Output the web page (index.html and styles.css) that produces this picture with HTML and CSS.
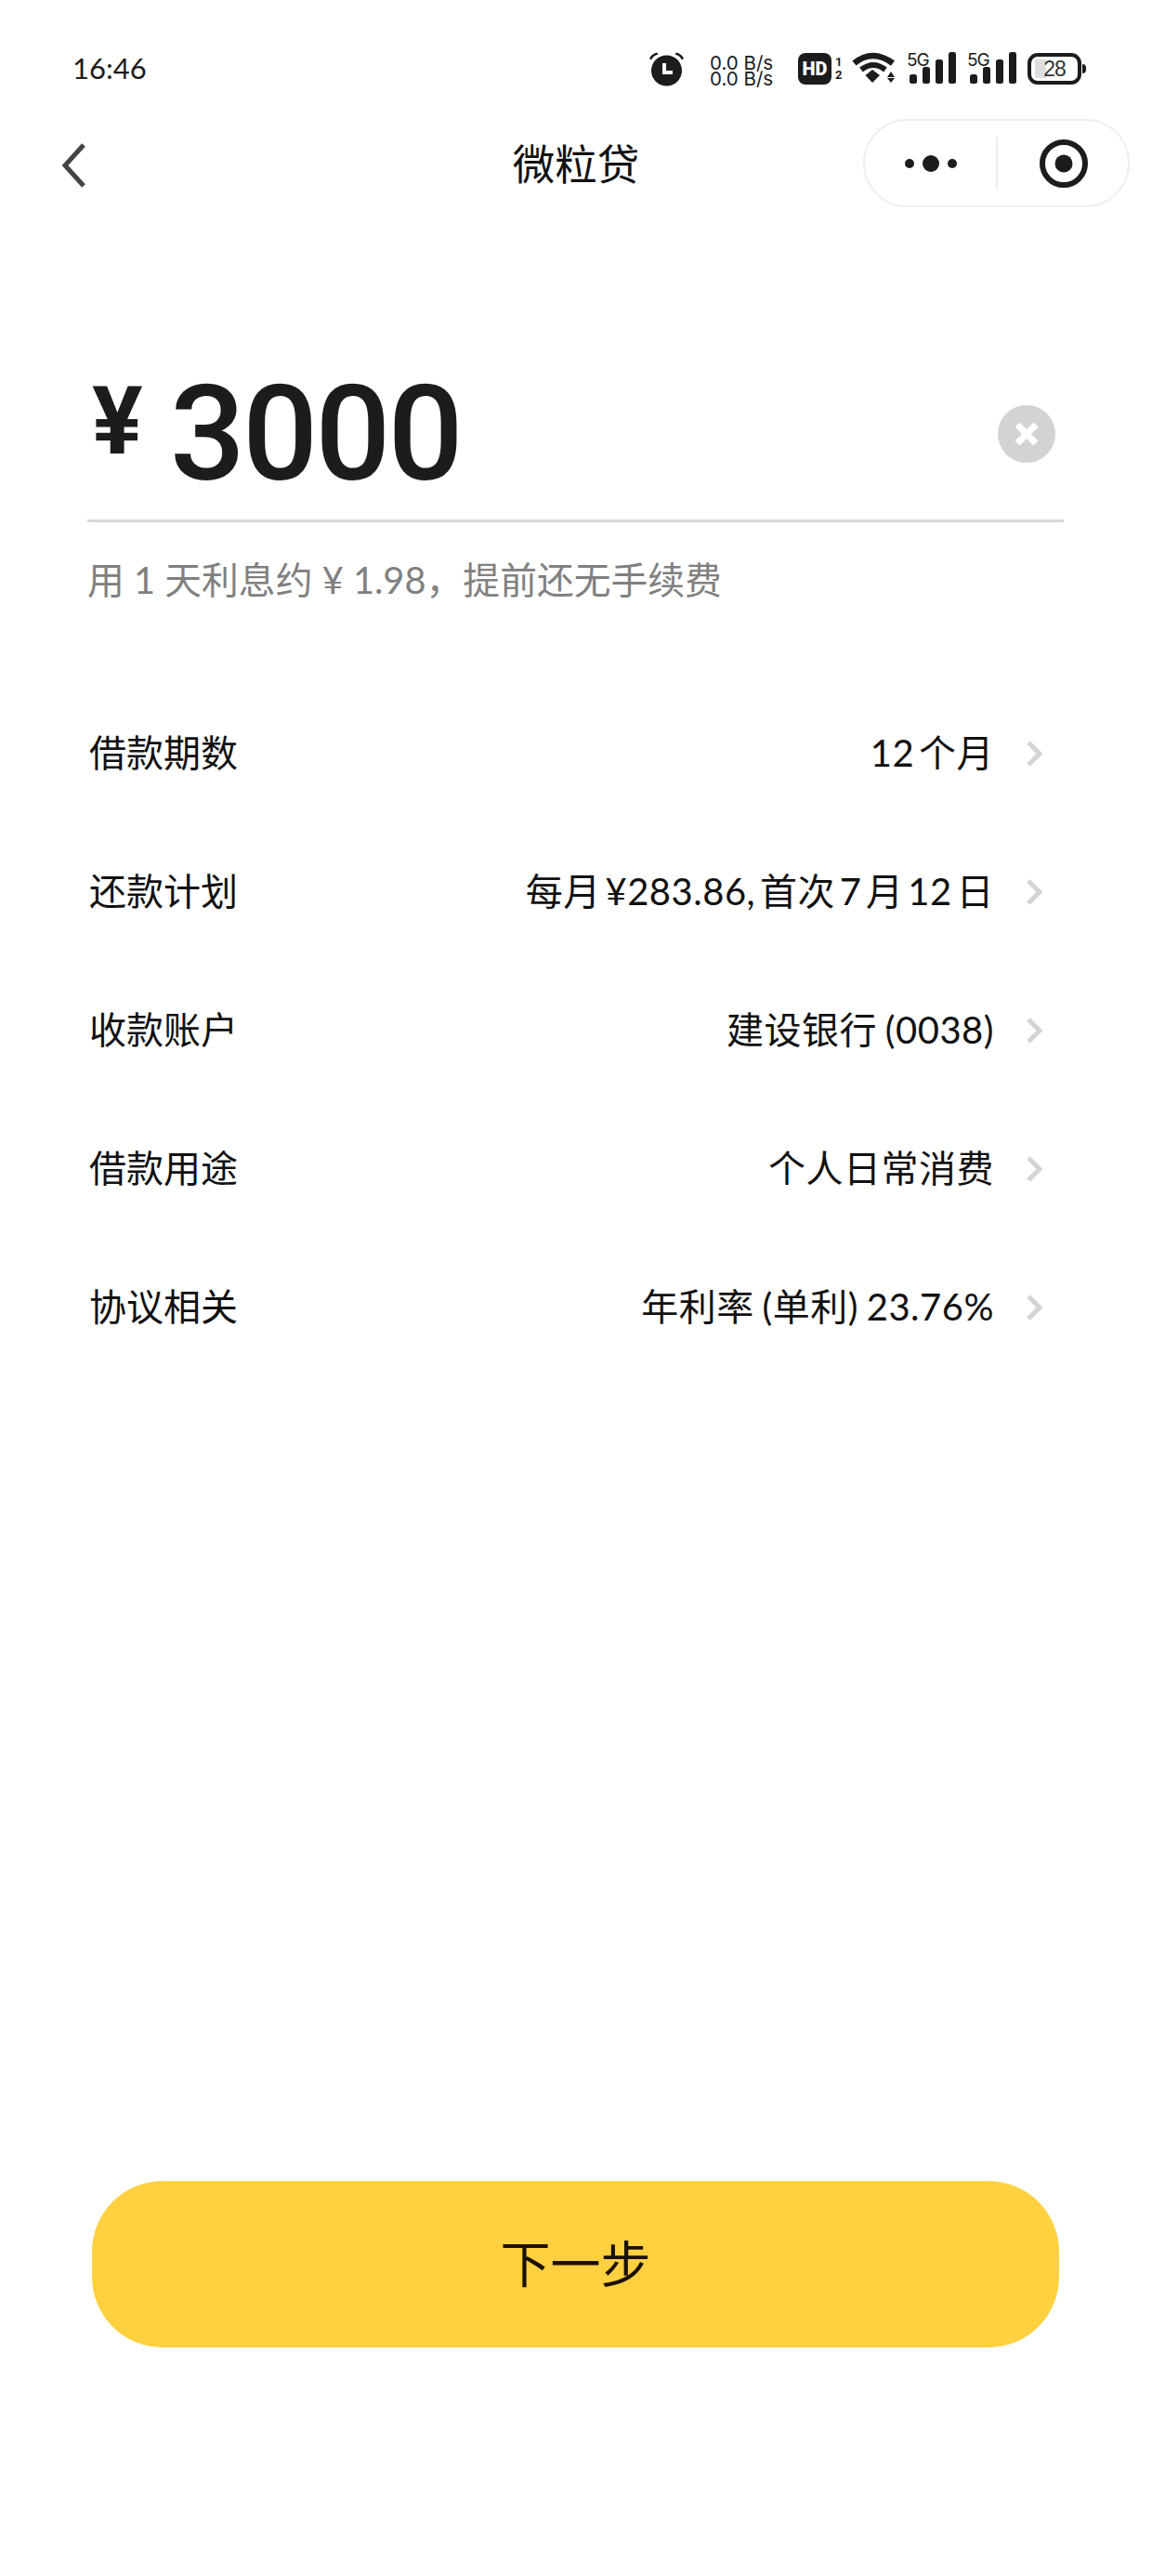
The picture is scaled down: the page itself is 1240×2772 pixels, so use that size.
FILE: index.html
```html
<!DOCTYPE html>
<html lang="zh">
<head>
<meta charset="utf-8">
<title>微粒贷</title>
<link rel="stylesheet" href="styles.css">
</head>
<body>
<div class="page">
  <div class="statusbar">
    <div class="time">16:46</div>
    <div class="status-icons">
      <svg class="ic-alarm" width="39" height="36" viewBox="0 0 39 36">
        <circle cx="19.5" cy="20" r="16.5" fill="#1c1c1c"/>
        <path d="M1 7 Q3 2 9 0.5 L10.5 2.5 Q5 4 3 8.5Z M38 7 Q36 2 30 0.5 L28.5 2.5 Q34 4 36 8.5Z" fill="#1c1c1c"/>
        <path d="M17 12 V22 H26" fill="none" stroke="#fff" stroke-width="4"/>
      </svg>
      <div class="speed"><span>0.0 B/s</span><span>0.0 B/s</span></div>
      <div class="hd">HD</div>
      <div class="sim"><span>1</span><span>2</span></div>
      <svg class="ic-wifi" width="47" height="32" viewBox="0 0 47 32">
        <path d="M2.5 11 Q22 -5 44 11" fill="none" stroke="#1c1c1c" stroke-width="6.5"/>
        <path d="M10 18 Q23 8 36 18" fill="none" stroke="#1c1c1c" stroke-width="6"/>
        <path d="M14.5 24 L22 18 L30 24 L22 32Z" fill="#1c1c1c"/>
        <path d="M38 26 L42 20 L46 26Z M38 27 L46 27 L42 32Z" fill="#1c1c1c"/>
      </svg>
      <svg class="ic-signal" width="53" height="35" viewBox="0 0 53 35">
        <text class="net" x="0" y="14.5">5G</text>
        <rect x="3" y="24" width="8" height="10" rx="2.5" fill="#1c1c1c"/>
        <rect x="17" y="16" width="8" height="18" rx="2.5" fill="#1c1c1c"/>
        <rect x="31" y="8" width="8" height="26" rx="2.5" fill="#1c1c1c"/>
        <rect x="45" y="0" width="8" height="34" rx="2.5" fill="#1c1c1c"/>
      </svg>
      <svg class="ic-signal" width="53" height="35" viewBox="0 0 53 35">
        <text class="net" x="0" y="14.5">5G</text>
        <rect x="3" y="24" width="8" height="10" rx="2.5" fill="#1c1c1c"/>
        <rect x="17" y="16" width="8" height="18" rx="2.5" fill="#1c1c1c"/>
        <rect x="31" y="8" width="8" height="26" rx="2.5" fill="#1c1c1c"/>
        <rect x="45" y="0" width="8" height="34" rx="2.5" fill="#1c1c1c"/>
      </svg>
      <div class="battery"><span class="battery-fill"></span><span class="battery-num">28</span></div>
    </div>
  </div>

  <div class="nav">
    <svg class="back" width="26" height="48" viewBox="0 0 26 48">
      <path d="M24 2 L4 24 L24 46" fill="none" stroke="#444" stroke-width="5"/>
    </svg>
    <div class="title">微粒贷</div>
    <div class="capsule">
      <div class="capsule-more">
        <svg width="56" height="20" viewBox="0 0 56 20">
          <circle cx="5" cy="10" r="5" fill="#1c1c1c"/>
          <circle cx="28" cy="10" r="9" fill="#1c1c1c"/>
          <circle cx="51" cy="10" r="5" fill="#1c1c1c"/>
        </svg>
      </div>
      <div class="capsule-close">
        <svg width="52" height="52" viewBox="0 0 52 52">
          <circle cx="26" cy="26" r="23" fill="none" stroke="#1c1c1c" stroke-width="6"/>
          <circle cx="26" cy="26" r="9.5" fill="#1c1c1c"/>
        </svg>
      </div>
    </div>
  </div>

  <div class="amount">
    <span class="currency">¥</span>
    <span class="value">3000</span>
    <svg class="clear" width="62" height="62" viewBox="0 0 62 62">
      <circle cx="31" cy="31" r="31" fill="#d3d3d3"/>
      <path d="M21 21 L41 41 M41 21 L21 41" stroke="#fff" stroke-width="7"/>
    </svg>
  </div>
  <div class="hint">用 1 天利息约 ¥ 1.98，提前还无手续费</div>

  <div class="rows">
    <div class="row"><span class="label">借款期数</span><span class="val">12 个月</span><svg class="chev" width="18" height="30" viewBox="0 0 18 30"><path d="M3 3 L15 15 L3 27" fill="none" stroke="#d4d4d4" stroke-width="5"/></svg></div>
    <div class="row"><span class="label">还款计划</span><span class="val">每月 ¥283.86, 首次 7 月 12 日</span><svg class="chev" width="18" height="30" viewBox="0 0 18 30"><path d="M3 3 L15 15 L3 27" fill="none" stroke="#d4d4d4" stroke-width="5"/></svg></div>
    <div class="row"><span class="label">收款账户</span><span class="val val-loose">建设银行 (0038)</span><svg class="chev" width="18" height="30" viewBox="0 0 18 30"><path d="M3 3 L15 15 L3 27" fill="none" stroke="#d4d4d4" stroke-width="5"/></svg></div>
    <div class="row"><span class="label">借款用途</span><span class="val">个人日常消费</span><svg class="chev" width="18" height="30" viewBox="0 0 18 30"><path d="M3 3 L15 15 L3 27" fill="none" stroke="#d4d4d4" stroke-width="5"/></svg></div>
    <div class="row"><span class="label">协议相关</span><span class="val val-loose">年利率 (单利) 23.76%</span><svg class="chev" width="18" height="30" viewBox="0 0 18 30"><path d="M3 3 L15 15 L3 27" fill="none" stroke="#d4d4d4" stroke-width="5"/></svg></div>
  </div>

  <div class="next"><span class="next-text">下一步</span></div>
</div>
</body>
</html>
```
FILE: styles.css
```css
* { box-sizing: border-box; }
html, body { margin: 0; padding: 0; background: #fff; }
body { font-family: "Lato", "Noto Sans CJK SC", sans-serif; color: #1c1c1c; }
.page { width: 1240px; height: 2772px; display: flex; flex-direction: column; padding-bottom: 246px; overflow: hidden; }

.statusbar { margin-top: 56px; height: 36px; padding: 0 76px 0 78px; display: flex; justify-content: space-between; align-items: center; flex: none; }
.time { font-family: "Lato", sans-serif; font-size: 31px; line-height: 36px; padding-bottom: 3px; }
.status-icons { display: flex; align-items: flex-start; height: 36px; }
.status-icons svg { overflow: visible; flex: none; }
.speed { margin-left: 27px; width: 65px; display: flex; flex-direction: column; font-family: "Inter", sans-serif; font-size: 20.5px; line-height: 17px; padding-top: 3px; white-space: nowrap; }
.hd { margin-left: 30px; margin-top: 1px; width: 36px; height: 34px; border-radius: 8px; background: #1c1c1c; color: #fff; font-family: "Roboto", sans-serif; font-weight: 900; font-size: 20px; line-height: 34px; text-align: center; }
.sim { margin-left: 4px; width: 9px; margin-top: 4px; display: flex; flex-direction: column; font-family: "Roboto", sans-serif; font-weight: 700; font-size: 13px; line-height: 14px; }
.ic-wifi { margin-left: 9px; margin-top: 1px; }
.ic-signal { margin-left: 12px; margin-top: 0; }
.ic-signal + .ic-signal { margin-left: 12px; }
.net { font-family: "Inter", sans-serif; font-size: 19px; letter-spacing: -1px; fill: #1c1c1c; }
.battery { margin-left: 12px; margin-top: 1px; position: relative; width: 58px; height: 34px; border: 4px solid #1c1c1c; border-radius: 11px; display: flex; align-items: center; justify-content: center; }
.battery::after { content: ""; position: absolute; right: -9px; top: 8px; width: 4px; height: 10px; background: #1c1c1c; border-radius: 0 5px 5px 0; }
.battery-fill { position: absolute; left: 4px; top: 3px; bottom: 3px; width: 12px; background: #ddd; }
.battery-num { position: relative; font-family: "Liberation Sans", sans-serif; font-size: 23px; line-height: 24px; letter-spacing: -1px; color: #333; }

.nav { margin-top: 36px; height: 95px; flex: none; padding: 0 24px; display: grid; grid-template-columns: 1fr auto 1fr; align-items: center; }
.back { margin-left: 42px; margin-top: 4px; }
.title { font-size: 45.5px; line-height: 60px; color: #111; padding-top: 3px; }
.capsule { justify-self: end; width: 287px; height: 95px; border: 2px solid #eee; border-radius: 48px; display: flex; align-items: center; }
.capsule-more { width: 143px; height: 57px; border-right: 2px solid #eee; display: flex; align-items: center; justify-content: center; }
.capsule-close { flex: 1; display: flex; align-items: center; justify-content: center; padding-left: 2px; }
.capsule svg { display: block; }

.amount { margin: 152px 95px 0 94px; height: 187px; flex: none; border-bottom: 3px solid #d8d8d8; display: flex; align-items: center; padding-left: 5px; }
.currency { font-family: "Roboto", sans-serif; font-weight: 700; font-size: 102px; line-height: 110px; margin-bottom: 29px; }
.value { font-family: "Roboto", sans-serif; font-weight: 500; font-size: 143px; line-height: 170px; letter-spacing: -3px; margin-left: 29px; }
.clear { margin-left: auto; margin-right: 9px; }

.hint { margin: 32px 94px 0; font-size: 39.8px; line-height: 60px; font-weight: 400; color: #808080; flex: none; white-space: nowrap; }

.rows { margin-top: 82px; flex: none; display: flex; flex-direction: column; }
.row { height: 149px; padding: 0 118px 0 96px; display: flex; align-items: center; font-size: 40px; color: #111; }
.label { flex: 1; margin-bottom: 6px; }
.val { white-space: nowrap; margin-bottom: 6px; letter-spacing: 0.5px; word-spacing: -6px; }
.val-loose { word-spacing: -2px; }
.chev { margin-left: 34px; display: block; }

.next { margin: auto 100px 0 99px; height: 179px; flex: none; background: #ffd040; border-radius: 76px; display: flex; align-items: center; justify-content: center; font-size: 54px; color: #1c1100; }
.next-text { margin-bottom: 6px; }
```
